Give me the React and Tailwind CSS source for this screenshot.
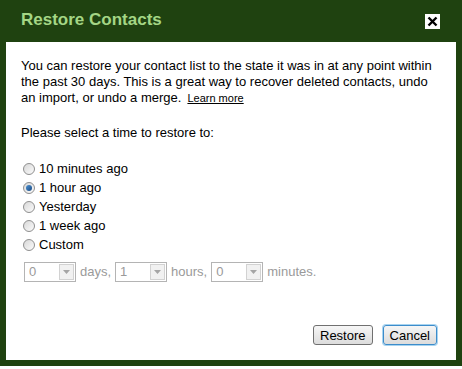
import React from "react";

const options = [
  { label: "10 minutes ago", checked: false },
  { label: "1 hour ago", checked: true },
  { label: "Yesterday", checked: false },
  { label: "1 week ago", checked: false },
  { label: "Custom", checked: false },
];

const Radio = ({ checked }) => (
  <span className="relative flex items-center justify-center w-[12px] h-[12px] rounded-full border border-[#8f8f8f] bg-gradient-to-br from-[#d8d8d8] to-[#fbfbfb]">
    {checked && (
      <span className="w-[6px] h-[6px] rounded-full bg-gradient-to-br from-[#4a8fd0] to-[#1d4d85]" />
    )}
  </span>
);

const FakeSelect = ({ value }) => (
  <span className="flex items-center justify-between w-[52px] h-[20px] border border-[#b4b4b4] bg-white pl-[4px] pr-[1px]">
    <span className="text-[#9a9a9a]">{value}</span>
    <span className="flex items-center justify-center w-[15px] h-[16px] border border-[#d2d2d2] bg-[#f1f1f1]">
      <svg width="7" height="4" viewBox="0 0 7 4">
        <path d="M0 0h7L3.5 4z" fill="#a5a5a5" />
      </svg>
    </span>
  </span>
);

const Button = ({ children, focused }) => (
  <button
    className={`h-[20px] px-[6px] rounded-[3px] border text-[13px] leading-none text-black bg-gradient-to-b from-[#f6f6f6] to-[#dcdcdc] ${
      focused ? "border-[#3c8ccb] shadow-[0_0_0_1px_#a8d4f0]" : "border-[#707070]"
    }`}
  >
    {children}
  </button>
);

export default function App() {
  return (
    <div className="w-[462px] h-[369px] bg-white overflow-hidden font-['Liberation_Sans',Arial,sans-serif]">
      <div className="h-[366px] bg-[#1f4210] px-[6px] pb-[6px] flex flex-col">
        {/* header */}
        <div className="h-[42px] flex items-center justify-between pl-[15px] pr-[16px] shrink-0">
          <h1 className="text-[17px] font-bold text-[#a4d685] pb-[2px]">Restore Contacts</h1>
          <span className="flex items-center justify-center w-[15px] h-[15px] bg-white">
            <svg width="11" height="11" viewBox="0 0 11 11">
              <path d="M1.5 1.5l8 8M9.5 1.5l-8 8" stroke="#000" strokeWidth="2.4" />
            </svg>
          </span>
        </div>

        {/* body */}
        <div className="flex-1 bg-white px-[15px] pt-[16px] text-[13px] leading-[16px] text-black flex flex-col">
          <p>
            You can restore your contact list to the state it was in at any point within the past
            30 days. This is a great way to recover deleted contacts, undo an import, or undo a
            merge.
            <a className="inline-block align-baseline ml-[6px] text-[11px] leading-[13px] underline text-black">
              Learn more
            </a>
          </p>

          <p className="mt-[19px]">Please select a time to restore to:</p>

          <div className="mt-[20px] flex flex-col gap-[3px]">
            {options.map((o) => (
              <label key={o.label} className="flex items-center gap-[4px] h-[16px] pl-[2px]">
                <Radio checked={o.checked} />
                <span>{o.label}</span>
              </label>
            ))}
          </div>

          <div className="mt-[9px] ml-[3px] flex items-center gap-[4px] text-[#9a9a9a]">
            <FakeSelect value="0" />
            <span>days,</span>
            <FakeSelect value="1" />
            <span>hours,</span>
            <FakeSelect value="0" />
            <span>minutes.</span>
          </div>

          <div className="mt-auto mb-[15px] flex justify-end gap-[10px] pr-[4px]">
            <Button>Restore</Button>
            <Button focused>Cancel</Button>
          </div>
        </div>
      </div>
    </div>
  );
}
